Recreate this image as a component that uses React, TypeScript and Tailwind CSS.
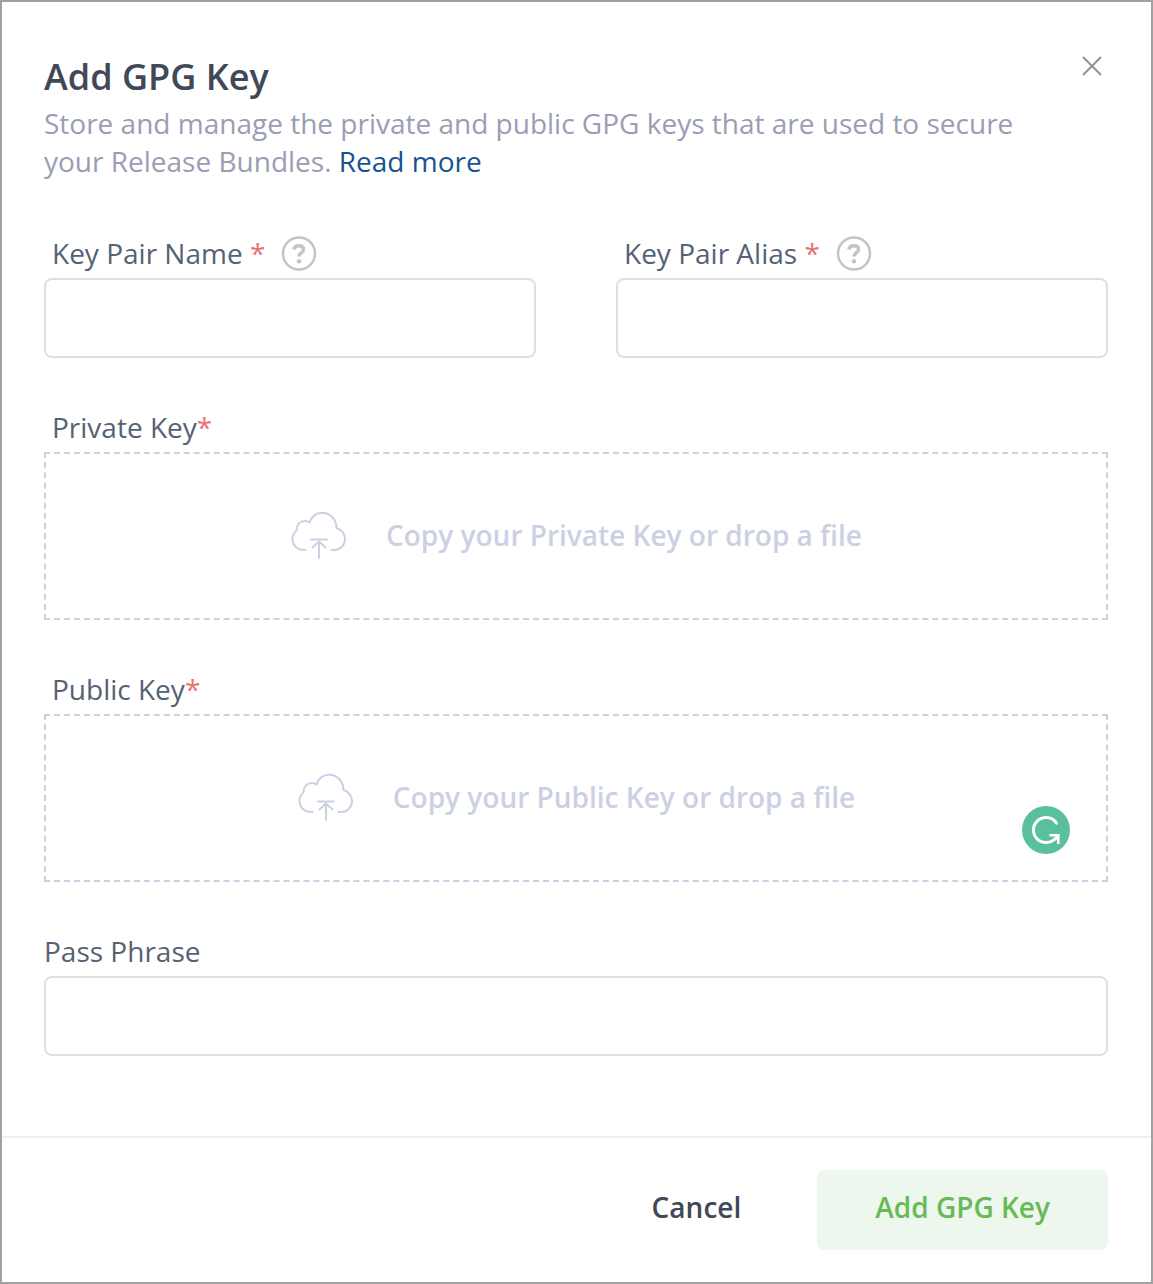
import type { ReactNode } from 'react';

const UploadIcon = () => (
  <svg width="56" height="48" viewBox="0 0 56 48" fill="none" stroke="#cbd0e3" strokeWidth="2" strokeLinecap="round" aria-hidden="true">
    <path d="M15.500 39H14C7 39 2.500 34 2.500 28C2.500 24.500 4 21.500 6.500 19.500C6.500 13.500 10 10 15 10C16.800 10 18.200 10.400 19.500 11.500C22 5 26.500 1.800 32 1.800C40.500 1.800 46.500 8.500 46.500 17C51.500 18.500 55 23 55 28C55 34 50 39 44.500 39H41.500" />
    <path d="M21 28.500H37M29 47V31M22.500 36.500L29 30.500L35.500 36.500" />
  </svg>
);

const HelpIcon = () => (
  <svg width="36" height="36" viewBox="0 0 36 36" fill="none" stroke="#c4c4c4" aria-hidden="true">
    <circle cx="18" cy="18.500" r="16" strokeWidth="2.500" />
    <path d="M13 14.500C13.300 12 15 10.800 17.800 10.800C20.600 10.800 22.500 12 22.500 14.500C22.500 17.800 18 18 18 21.500" strokeWidth="3.500" />
    <circle cx="18" cy="26.300" r="2.200" fill="#c4c4c4" stroke="none" />
  </svg>
);

const GrammarIcon = () => (
  <svg width="48" height="48" viewBox="0 0 48 48" fill="none" aria-hidden="true">
    <circle cx="24" cy="24" r="24" fill="#5ac09c" />
    <path d="M34.500 17.300C32.300 13.500 28.500 11.500 24.200 11.500C17 11.500 11.500 17 11.500 24C11.500 31 17 36.500 24 36.500C29 36.500 33 34 36 29.500" stroke="#fff" strokeWidth="3" strokeLinecap="round" />
    <path d="M27.500 29.300H36.300V38" stroke="#fff" strokeWidth="2.500" />
  </svg>
);

const Required = () => <span className="text-[#e57373]">*</span>;

const inputStyles = 'block h-20 w-full rounded-lg border-2 border-[#dedfe6] bg-white px-4 text-[#556274] outline-none';

const TextField = ({ id, label }: { id: string; label: string }) => (
  <div>
    <div className="mb-[6px] flex items-center gap-4 pl-2">
      <label htmlFor={id}>
        {label} <Required />
      </label>
      <button type="button" aria-label={`About ${label}`}>
        <HelpIcon />
      </button>
    </div>
    <input id={id} type="text" required className={inputStyles} />
  </div>
);

const DropField = ({ id, label, children }: { id: string; label: string; children?: ReactNode }) => (
  <div className="mt-[50px]">
    <label htmlFor={id} className="mb-[6px] block pl-2">
      {label}
      <Required />
    </label>
    <div className="relative">
      <label
        htmlFor={id}
        className="flex h-[168px] cursor-pointer items-center justify-center gap-10 border-2 border-dashed border-[#cbd0e3] pb-0.5 font-semibold text-[#cbd0e3]"
      >
        <UploadIcon />
        Copy your {label} or drop a file
      </label>
      <input id={id} type="file" className="sr-only" />
      {children}
    </div>
  </div>
);

const App = () => {
  return (
    <form className="flex min-h-screen flex-col border-2 border-[#a1a1a1] bg-white font-['Open_Sans',sans-serif] text-[28px] leading-[38px] text-[#556274]">
      <div className="flex-1 pt-[50px] pr-[43px] pb-20 pl-[42px]">
        <header className="flex items-start justify-between">
          <div className="max-w-[1000px]">
            <h1 className="mb-0.5 text-4xl leading-[50px] font-semibold text-[#414857]">Add GPG Key</h1>
            <p className="text-[#9a9db5]">
              Store and manage the private and public GPG keys that are used to secure your Release Bundles.{' '}
              <a href="#" className="text-[#175292]">
                Read more
              </a>
            </p>
          </div>
          <button type="button" aria-label="Close" className="p-1">
            <svg width="24" height="24" viewBox="0 0 24 24" stroke="#919396" strokeWidth="2" aria-hidden="true">
              <path d="M3 1L21 19M21 1L3 19" />
            </svg>
          </button>
        </header>

        <div className="mt-[54px] grid grid-cols-2 gap-20">
          <TextField id="pair-name" label="Key Pair Name" />
          <TextField id="pair-alias" label="Key Pair Alias" />
        </div>

        <DropField id="private-key" label="Private Key" />
        <DropField id="public-key" label="Public Key">
          <button type="button" aria-label="Check writing" className="absolute right-[38px] bottom-7">
            <GrammarIcon />
          </button>
        </DropField>

        <div className="mt-[50px]">
          <label htmlFor="pass-phrase" className="mb-[6px] block">
            Pass Phrase
          </label>
          <input id="pass-phrase" type="password" className={inputStyles} />
        </div>
      </div>

      <footer className="flex justify-end gap-5 border-t-2 border-[#f0f0f0] py-8 pr-[43px] font-semibold">
        <button type="button" className="h-20 px-14 pb-1.5 text-[#414857]">
          Cancel
        </button>
        <button type="submit" className="h-20 rounded-lg bg-[#edf7ee] px-[58px] pb-1.5 text-[#66bb55]">
          Add GPG Key
        </button>
      </footer>
    </form>
  );
};

export default App;
